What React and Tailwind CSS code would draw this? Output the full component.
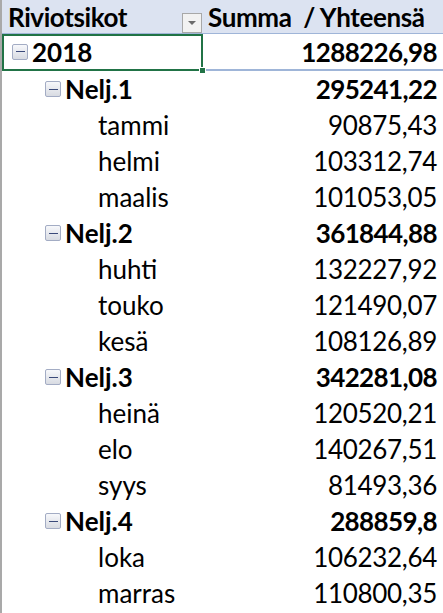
const data = [
  {
    q: "Nelj.1",
    total: "295241,22",
    months: [
      ["tammi", "90875,43"],
      ["helmi", "103312,74"],
      ["maalis", "101053,05"],
    ],
  },
  {
    q: "Nelj.2",
    total: "361844,88",
    months: [
      ["huhti", "132227,92"],
      ["touko", "121490,07"],
      ["kesä", "108126,89"],
    ],
  },
  {
    q: "Nelj.3",
    total: "342281,08",
    months: [
      ["heinä", "120520,21"],
      ["elo", "140267,51"],
      ["syys", "81493,36"],
    ],
  },
  {
    q: "Nelj.4",
    total: "288859,8",
    months: [
      ["loka", "106232,64"],
      ["marras", "110800,35"],
    ],
  },
];

function Minus() {
  return (
    <span className="w-[16px] h-[16px] mr-[4px] flex items-center justify-center rounded-[2px] border border-[#a3acc4] bg-gradient-to-b from-[#f7f8fb] to-[#d8dbe2] shrink-0">
      <span className="w-[9px] h-[1px] bg-[#3b4a7a]" />
    </span>
  );
}

function Row({ label, value, bold, indent, toggle }) {
  return (
    <div className="flex h-[36px] items-center">
      <div className={`w-[201px] flex items-center ${indent}`}>
        {toggle && <Minus />}
        <span className={bold ? "font-bold" : ""}>{label}</span>
      </div>
      <div className={`flex-1 text-right pr-[6px] ${bold ? "font-bold tracking-[-0.6px]" : "tracking-[-0.3px]"}`}>{value}</div>
    </div>
  );
}

function App() {
  return (
    <div
      className="w-[443px] h-[613px] overflow-hidden bg-white border-l-2 border-[#a9a9a9] text-[26px] text-black leading-none"
      style={{ fontFamily: "Lato, 'Open Sans', sans-serif" }}
    >
      <div className="flex h-[34px] items-center bg-[#dce3f1] border-b border-[#9fb5d8] font-bold">
        <div className="w-[201px] flex items-center justify-between pl-[6px] pr-[1px] h-full">
          <span className="tracking-[-0.4px]">Riviotsikot</span>
          <span className="w-[20px] h-[20px] mt-[12px] border border-[#a8a8a8] bg-[#f2f2f2] flex items-center justify-center">
            <span className="w-0 h-0 border-l-[4px] border-r-[4px] border-t-[4px] border-l-transparent border-r-transparent border-t-[#6b6b6b]" />
          </span>
        </div>
        <div className="flex-1 pl-[5px] whitespace-pre tracking-[-0.4px]">Summa  / Yhteensä</div>
      </div>

      <div className="relative flex h-[37px] items-center border-b-2 border-[#9fb5d8]">
        <div className="absolute left-0 top-0 w-[201px] h-[37px] border-2 border-[#217346]" />
        <div className="absolute left-[197px] top-[33px] w-[7px] h-[7px] bg-[#217346] border border-white" />
        <div className="w-[201px] flex items-center pl-[10px] font-bold">
          <Minus />
          <span>2018</span>
        </div>
        <div className="flex-1 text-right pr-[6px] font-bold tracking-[-0.6px]">1288226,98</div>
      </div>

      {data.map((g) => (
        <div key={g.q}>
          <Row label={g.q} value={g.total} bold toggle indent="pl-[43px]" />
          {g.months.map(([m, v]) => (
            <Row key={m} label={m} value={v} indent="pl-[96px]" />
          ))}
        </div>
      ))}
    </div>
  );
}

export default App;
